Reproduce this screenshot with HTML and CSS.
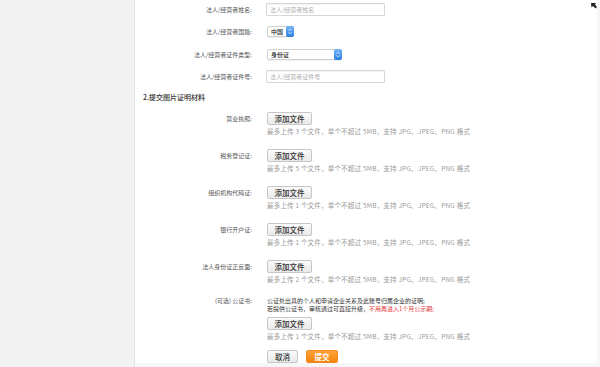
FILE: index.html
```html
<!DOCTYPE html>
<html lang="zh-CN">
<head>
  <meta charset="UTF-8">
  <meta name="viewport" content="width=device-width, initial-scale=1.0">
  <title>商家认证资料</title>
  <link rel="stylesheet" href="styles.css">
</head>
<body>
  <div class="page">
    <aside class="sidebar"></aside>

    <main class="main">
      <span class="corner-icon">
        <svg width="6" height="6" viewBox="0 0 6 6"><path d="M0 0 L5 0 L4 1.5 L6 4 L4.5 5.5 L2 3 L0.5 4.5 Z" fill="#222"/></svg>
      </span>

      <form class="form">
        <div class="field-row">
          <label class="label" for="owner-name">法人/经营者姓名:</label>
          <div class="control">
            <input class="text-input" id="owner-name" type="text" placeholder="法人/经营者姓名">
          </div>
        </div>

        <div class="field-row">
          <label class="label">法人/经营者国籍:</label>
          <div class="control">
            <div class="select select-short">
              <span class="select-value">中国</span>
              <span class="select-arrow">
                <svg width="4" height="7" viewBox="0 0 4 7"><path d="M0.6 2.6 L2 1.2 L3.4 2.6 M0.6 4.4 L2 5.8 L3.4 4.4" stroke="#fff" stroke-width="0.8" fill="none"/></svg>
              </span>
            </div>
          </div>
        </div>

        <div class="field-row">
          <label class="label">法人/经营者证件类型:</label>
          <div class="control">
            <div class="select select-long">
              <span class="select-value">身份证</span>
              <span class="select-arrow">
                <svg width="4" height="7" viewBox="0 0 4 7"><path d="M0.6 2.6 L2 1.2 L3.4 2.6 M0.6 4.4 L2 5.8 L3.4 4.4" stroke="#fff" stroke-width="0.8" fill="none"/></svg>
              </span>
            </div>
          </div>
        </div>

        <div class="field-row">
          <label class="label" for="owner-id">法人/经营者证件号:</label>
          <div class="control">
            <input class="text-input" id="owner-id" type="text" placeholder="法人/经营者证件号">
          </div>
        </div>

        <h3 class="section-title">2.提交图片证明材料</h3>

        <div class="upload-row">
          <span class="label">营业执照:</span>
          <div class="control">
            <button type="button" class="btn">添加文件</button>
            <p class="hint">最多上传 3 个文件，单个不超过 5MB，支持 JPG、JPEG、PNG 格式</p>
          </div>
        </div>

        <div class="upload-row">
          <span class="label">税务登记证:</span>
          <div class="control">
            <button type="button" class="btn">添加文件</button>
            <p class="hint">最多上传 5 个文件，单个不超过 5MB，支持 JPG、JPEG、PNG 格式</p>
          </div>
        </div>

        <div class="upload-row">
          <span class="label">组织机构代码证:</span>
          <div class="control">
            <button type="button" class="btn">添加文件</button>
            <p class="hint">最多上传 1 个文件，单个不超过 5MB，支持 JPG、JPEG、PNG 格式</p>
          </div>
        </div>

        <div class="upload-row">
          <span class="label">银行开户证:</span>
          <div class="control">
            <button type="button" class="btn">添加文件</button>
            <p class="hint">最多上传 1 个文件，单个不超过 5MB，支持 JPG、JPEG、PNG 格式</p>
          </div>
        </div>

        <div class="upload-row">
          <span class="label">法人身份证正反面:</span>
          <div class="control">
            <button type="button" class="btn">添加文件</button>
            <p class="hint">最多上传 2 个文件，单个不超过 5MB，支持 JPG、JPEG、PNG 格式</p>
          </div>
        </div>

        <div class="upload-row upload-row-note">
          <span class="label">(可选) 公证书:</span>
          <div class="control">
            <p class="note">公证处出具的个人和申请企业关系及此账号归属企业的证明;</p>
            <p class="note">若提供公证书，审核通过可直接升级，<span class="note-warn">不用再进入1个月公示期;</span></p>
            <button type="button" class="btn btn-spaced">添加文件</button>
            <p class="hint">最多上传 1 个文件，单个不超过 5MB，支持 JPG、JPEG、PNG 格式</p>
          </div>
        </div>

        <div class="actions">
          <button type="button" class="btn btn-cancel">取消</button>
          <button type="submit" class="btn btn-submit">提交</button>
        </div>
      </form>

      <div class="bottom-strip"></div>
    </main>
  </div>
</body>
</html>
```

FILE: styles.css
```css
body {
  margin: 0;
  padding: 0;
  height: 367px;
  overflow: hidden;
  background-color: #ffffff;
  font-family: "Noto Sans CJK SC", "Noto Sans", sans-serif;
  color: #444;
}

.page {
  display: flex;
  height: 367px;
}

.sidebar {
  width: 134px;
  flex-shrink: 0;
  background-color: #f2f2f2;
  border-right: 1px solid #e4e4e4;
}

.main {
  position: relative;
  flex: 1;
  display: flex;
  flex-direction: column;
  border-right: 3px solid #f6f6f6;
}

.corner-icon {
  position: absolute;
  top: 2px;
  right: 0;
  line-height: 0;
}

.form {
  flex: 1;
  padding-top: 3px;
}

.field-row {
  display: grid;
  grid-template-columns: 121px 1fr;
  column-gap: 10px;
  align-items: center;
  height: 13px;
  margin-bottom: 9.3px;
}

.label {
  text-align: right;
  padding-right: 4px;
  font-size: 6px;
  color: #555;
  white-space: nowrap;
}

.control {
  display: flex;
  flex-direction: column;
  align-items: flex-start;
}

.text-input {
  box-sizing: border-box;
  width: 119px;
  height: 13px;
  margin: 0;
  padding: 0 3px;
  border: 1px solid #d6d6d6;
  border-radius: 1px;
  box-shadow: inset 0 1px 1px rgba(0, 0, 0, 0.05);
  font-family: inherit;
  font-size: 6px;
  color: #333;
}

.text-input::placeholder {
  color: #b0b0b0;
}

.select {
  box-sizing: border-box;
  display: flex;
  align-items: stretch;
  height: 11px;
  margin-left: 1px;
  border: 1px solid #cfcfcf;
  border-radius: 2px;
  background-color: #fff;
  box-shadow: 0 1px 1px rgba(0, 0, 0, 0.06);
}

.select-short {
  width: 27px;
}

.select-long {
  width: 75px;
}

.select-value {
  flex: 1;
  padding-left: 3px;
  font-size: 6px;
  line-height: 9px;
  font-weight: 500;
  color: #222;
}

.select-arrow {
  width: 8px;
  display: flex;
  align-items: center;
  justify-content: center;
  margin: -1px -1px -1px 0;
  border-radius: 2px;
  background: linear-gradient(#74b5f7, #2b7fe3);
}

.section-title {
  margin: 9px 0 10px 8px;
  font-size: 7px;
  line-height: 10px;
  font-weight: 500;
  color: #333;
}

.upload-row {
  display: grid;
  grid-template-columns: 121px 1fr;
  column-gap: 10px;
  margin-bottom: 13px;
}

.upload-row .label {
  line-height: 13px;
}

.upload-row-note {
  margin-bottom: 0;
}

.upload-row-note .label {
  line-height: 8px;
}

.btn {
  box-sizing: border-box;
  height: 13px;
  width: 45px;
  margin: 0 0 0 1px;
  padding: 0;
  border: 1px solid #c6c6c6;
  border-radius: 2px;
  background: linear-gradient(#fbfbfb, #e9e9e9);
  font-family: inherit;
  font-size: 7.5px;
  line-height: 11px;
  font-weight: 500;
  color: #333;
  cursor: pointer;
}

.btn-spaced {
  margin-top: 4px;
}

.hint {
  margin: 2px 0 0 1px;
  font-size: 6.5px;
  letter-spacing: 0.2px;
  line-height: 9px;
  color: #9a9a9a;
  white-space: nowrap;
}

.note {
  margin: 0 0 0 1px;
  font-size: 6px;
  line-height: 8px;
  color: #333;
  white-space: nowrap;
}

.note-warn {
  color: #e4393c;
}

.actions {
  display: flex;
  gap: 7px;
  margin: 9px 0 0 131px;
}

.btn-cancel {
  width: 31px;
}

.btn-submit {
  width: 32px;
  border-color: #f08a1c;
  background: linear-gradient(#ffa23a, #f5850f);
  color: #fff;
  font-weight: 700;
}

.bottom-strip {
  height: 5px;
  background-color: #f6f6f6;
}
```
